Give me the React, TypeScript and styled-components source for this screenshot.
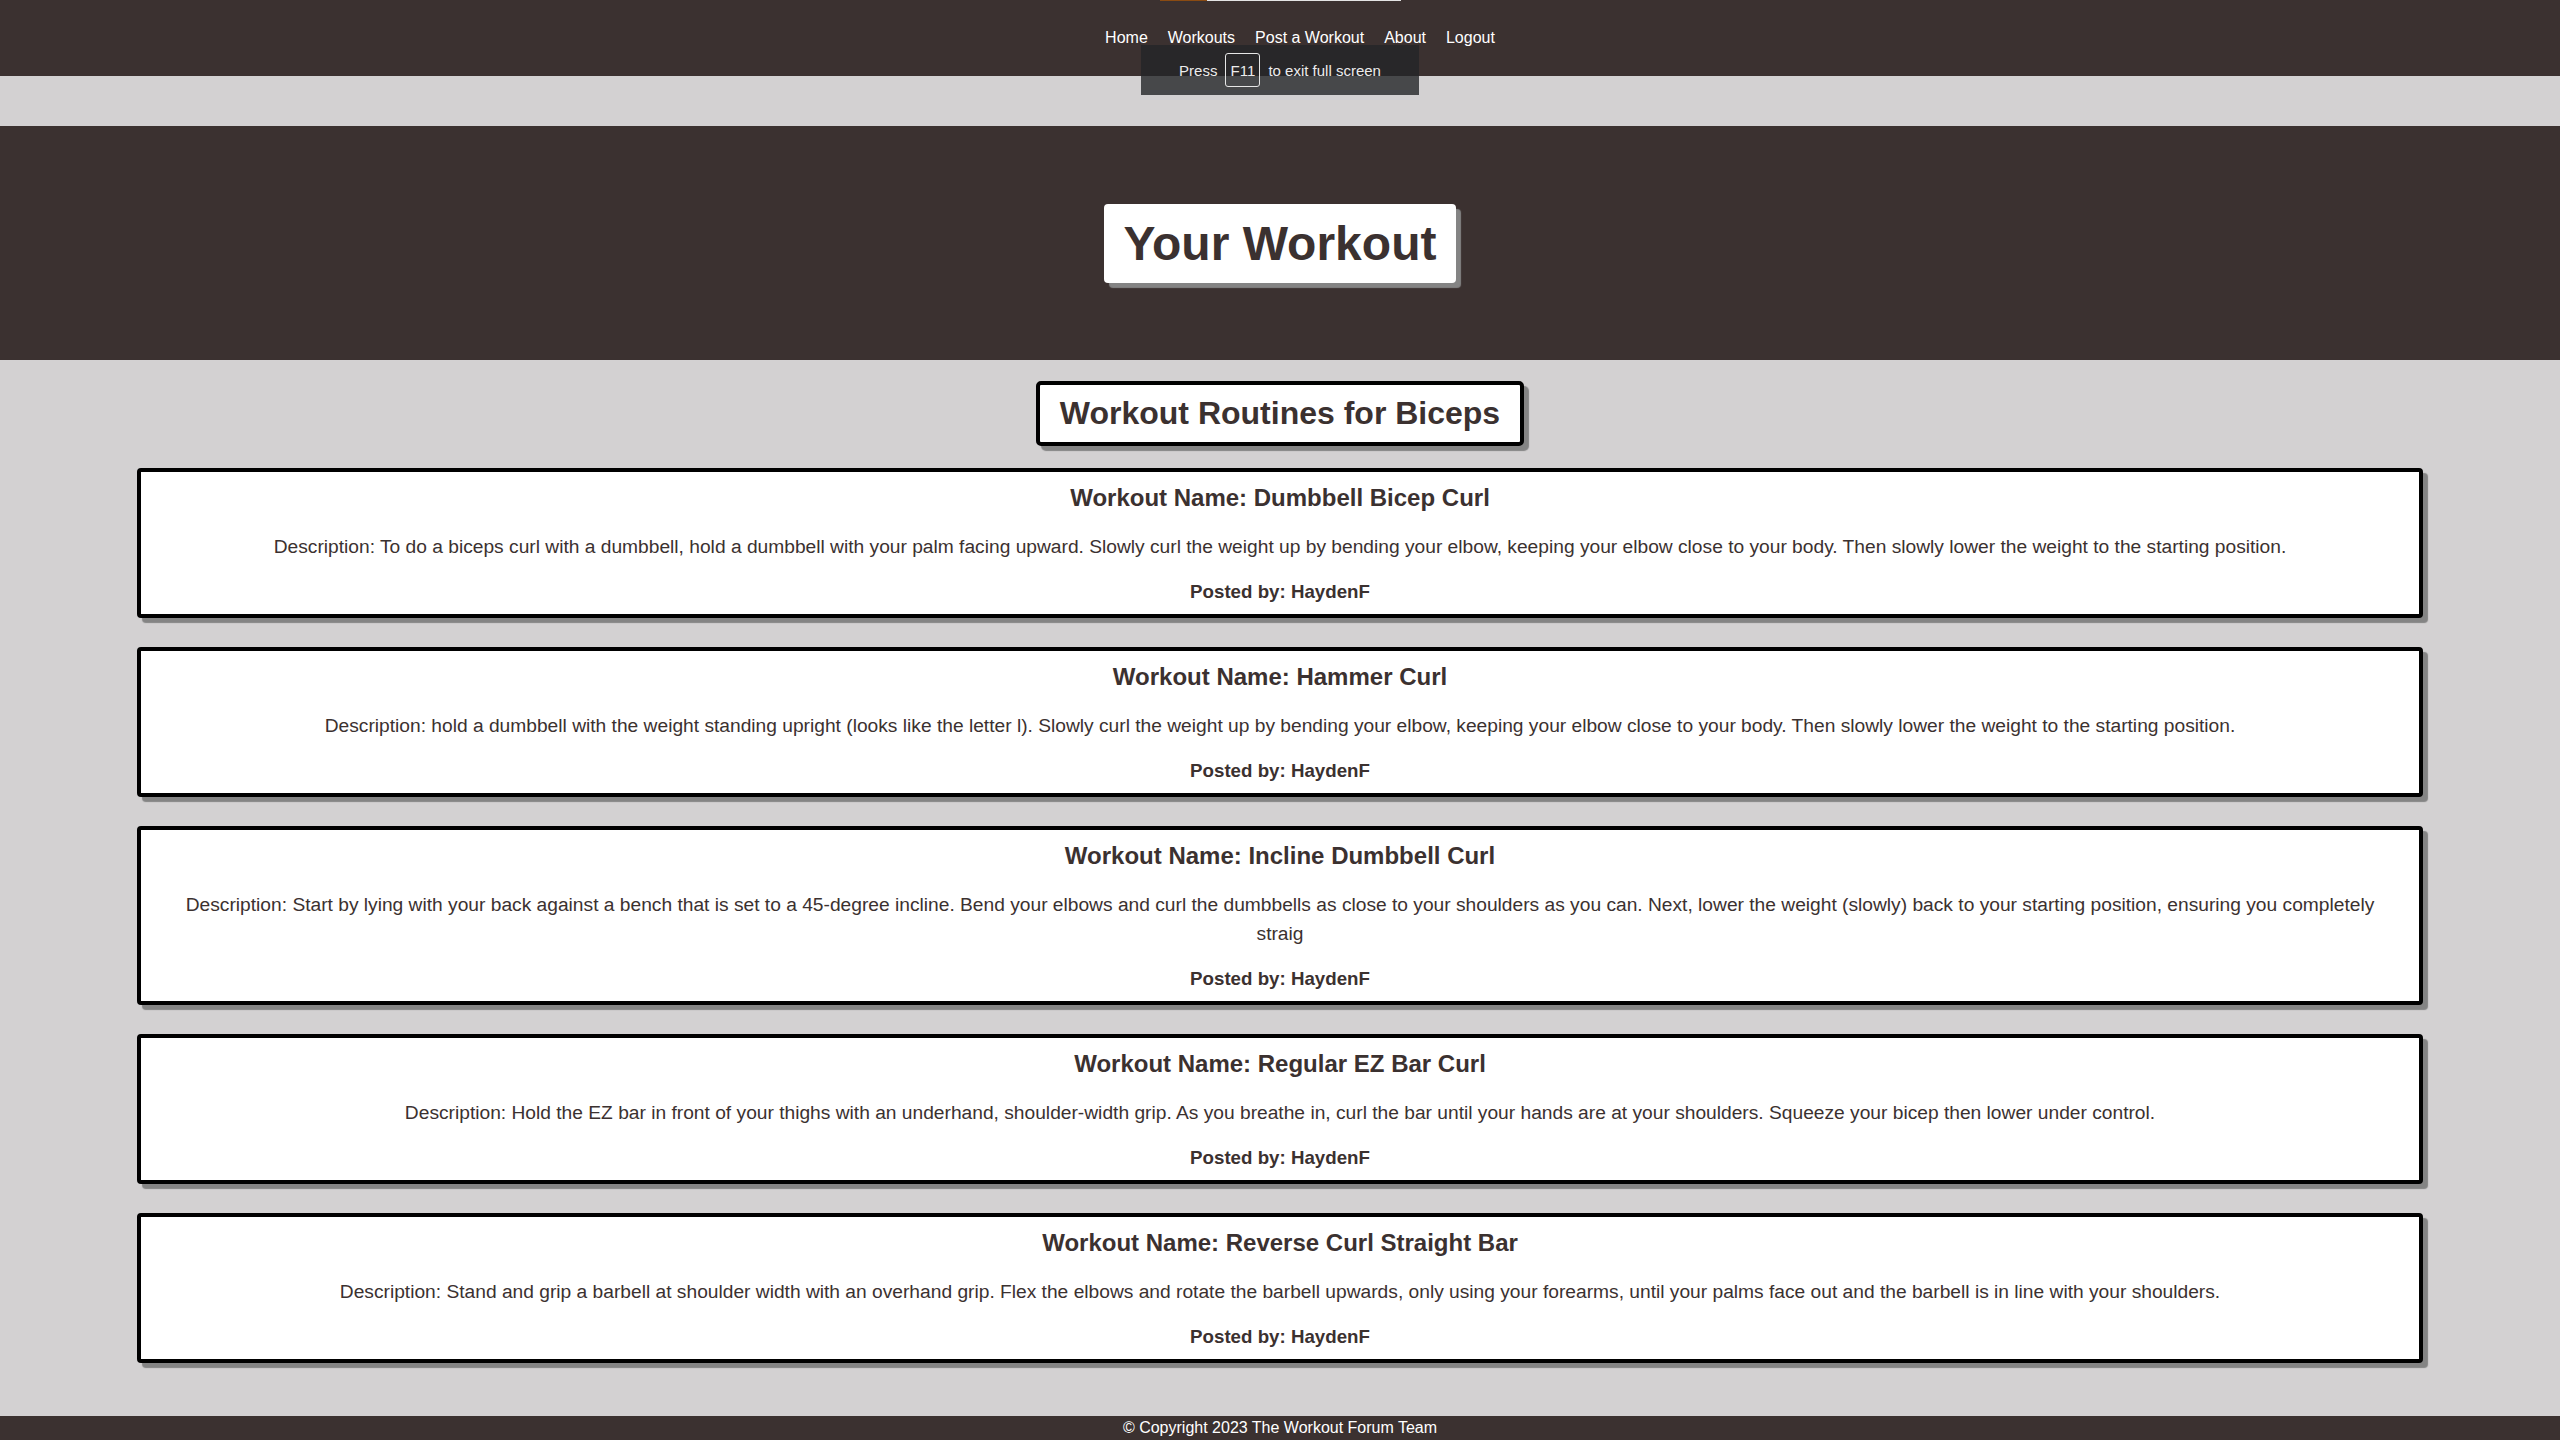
import React from "react";
import styled, { createGlobalStyle } from "styled-components";

const dark = "#3b3130";
const paper = "#d3d1d2";

const workouts = [
  {
    name: "Dumbbell Bicep Curl",
    description:
      "To do a biceps curl with a dumbbell, hold a dumbbell with your palm facing upward. Slowly curl the weight up by bending your elbow, keeping your elbow close to your body. Then slowly lower the weight to the starting position.",
    author: "HaydenF",
  },
  {
    name: "Hammer Curl",
    description:
      "hold a dumbbell with the weight standing upright (looks like the letter l). Slowly curl the weight up by bending your elbow, keeping your elbow close to your body. Then slowly lower the weight to the starting position.",
    author: "HaydenF",
  },
  {
    name: "Incline Dumbbell Curl",
    description:
      "Start by lying with your back against a bench that is set to a 45-degree incline. Bend your elbows and curl the dumbbells as close to your shoulders as you can. Next, lower the weight (slowly) back to your starting position, ensuring you completely straig",
    author: "HaydenF",
  },
  {
    name: "Regular EZ Bar Curl",
    description:
      "Hold the EZ bar in front of your thighs with an underhand, shoulder-width grip. As you breathe in, curl the bar until your hands are at your shoulders. Squeeze your bicep then lower under control.",
    author: "HaydenF",
  },
  {
    name: "Reverse Curl Straight Bar",
    description:
      "Stand and grip a barbell at shoulder width with an overhand grip. Flex the elbows and rotate the barbell upwards, only using your forearms, until your palms face out and the barbell is in line with your shoulders.",
    author: "HaydenF",
  },
];

const GlobalStyle = createGlobalStyle`
  html, body {
    margin: 0;
    padding: 0;
    background: ${paper};
    font-family: "Liberation Sans", Arial, sans-serif;
    color: ${dark};
  }
`;

const Page = styled.div`
  position: relative;
  min-height: 100vh;
  display: flex;
  flex-direction: column;
`;

const NavBar = styled.nav`
  height: 76px;
  padding-left: 40px;
  background: ${dark};
  display: flex;
  justify-content: center;
  align-items: center;
  gap: 20px;
`;

const NavLink = styled.a`
  color: #ffffff;
  font-size: 16px;
  text-decoration: none;
  cursor: pointer;
`;

// browser full-screen notice lying over the page
const ScreenToast = styled.div`
  position: absolute;
  top: 45px;
  left: 1141px;
  width: 278px;
  height: 50px;
  background: rgba(36, 37, 40, 0.8);
  display: flex;
  justify-content: center;
  align-items: center;
  gap: 8px;
  color: #ececec;
  font-size: 15px;
`;

const Key = styled.span`
  display: inline-flex;
  align-items: center;
  justify-content: center;
  width: 33px;
  height: 32px;
  border: 1px solid #e6e6e6;
  border-radius: 3px;
`;

const TopLine = styled.div`
  position: absolute;
  top: 0;
  left: 1160px;
  width: 241px;
  height: 1px;
  background: linear-gradient(to right, #8a4b12 0 47px, #e4e4e4 47px 100%);
`;

const Hero = styled.header`
  margin-top: 50px;
  height: 234px;
  background: ${dark};
  display: flex;
  justify-content: center;
  align-items: center;
`;

const HeroTitle = styled.h1`
  margin: 0;
  padding: 12px 20px;
  background: #ffffff;
  border-radius: 4px;
  box-shadow: 5px 5px 1px #848484;
  font-size: 48px;
  font-weight: bold;
  color: ${dark};
`;

const Main = styled.main`
  padding: 21px 10px 0;
  display: flex;
  flex-direction: column;
  align-items: center;
`;

const SectionTitle = styled.h2`
  margin: 0;
  padding: 10px 20px;
  background: #ffffff;
  border: 4px solid #000000;
  border-radius: 5px;
  box-shadow: 5px 5px 1px #848484;
  font-size: 32px;
  font-weight: bold;
`;

const CardList = styled.div`
  width: 90%;
  margin-top: 22px;
  display: flex;
  flex-direction: column;
  gap: 29px;
`;

const Card = styled.article`
  background: #ffffff;
  border: 4px solid #000000;
  border-radius: 4px;
  box-shadow: 5px 5px 1px #848484;
  padding: 11.5px 30px;
  display: flex;
  flex-direction: column;
  gap: 20px;
  text-align: center;
`;

const CardTitle = styled.h2`
  margin: 0;
  font-size: 24px;
  font-weight: bold;
`;

const Description = styled.p`
  margin: 0;
  font-size: 19.2px;
  line-height: 29px;
`;

const Author = styled.h3`
  margin: 0;
  font-size: 18.72px;
  font-weight: bold;
`;

const Footer = styled.footer`
  margin-top: auto;
  height: 24px;
  line-height: 24px;
  background: ${dark};
  color: #ffffff;
  font-size: 16px;
  text-align: center;
`;

export default function App() {
  return (
    <>
      <GlobalStyle />
      <Page>
        <TopLine />
        <NavBar>
          <NavLink>Home</NavLink>
          <NavLink>Workouts</NavLink>
          <NavLink>Post a Workout</NavLink>
          <NavLink>About</NavLink>
          <NavLink>Logout</NavLink>
        </NavBar>
        <ScreenToast>
          <span>Press</span>
          <Key>F11</Key>
          <span>to exit full screen</span>
        </ScreenToast>
        <Hero>
          <HeroTitle>Your Workout</HeroTitle>
        </Hero>
        <Main>
          <SectionTitle>Workout Routines for Biceps</SectionTitle>
          <CardList>
            {workouts.map((w) => (
              <Card key={w.name}>
                <CardTitle>Workout Name: {w.name}</CardTitle>
                <Description>Description: {w.description}</Description>
                <Author>Posted by: {w.author}</Author>
              </Card>
            ))}
          </CardList>
        </Main>
        <Footer>© Copyright 2023 The Workout Forum Team</Footer>
      </Page>
    </>
  );
}
